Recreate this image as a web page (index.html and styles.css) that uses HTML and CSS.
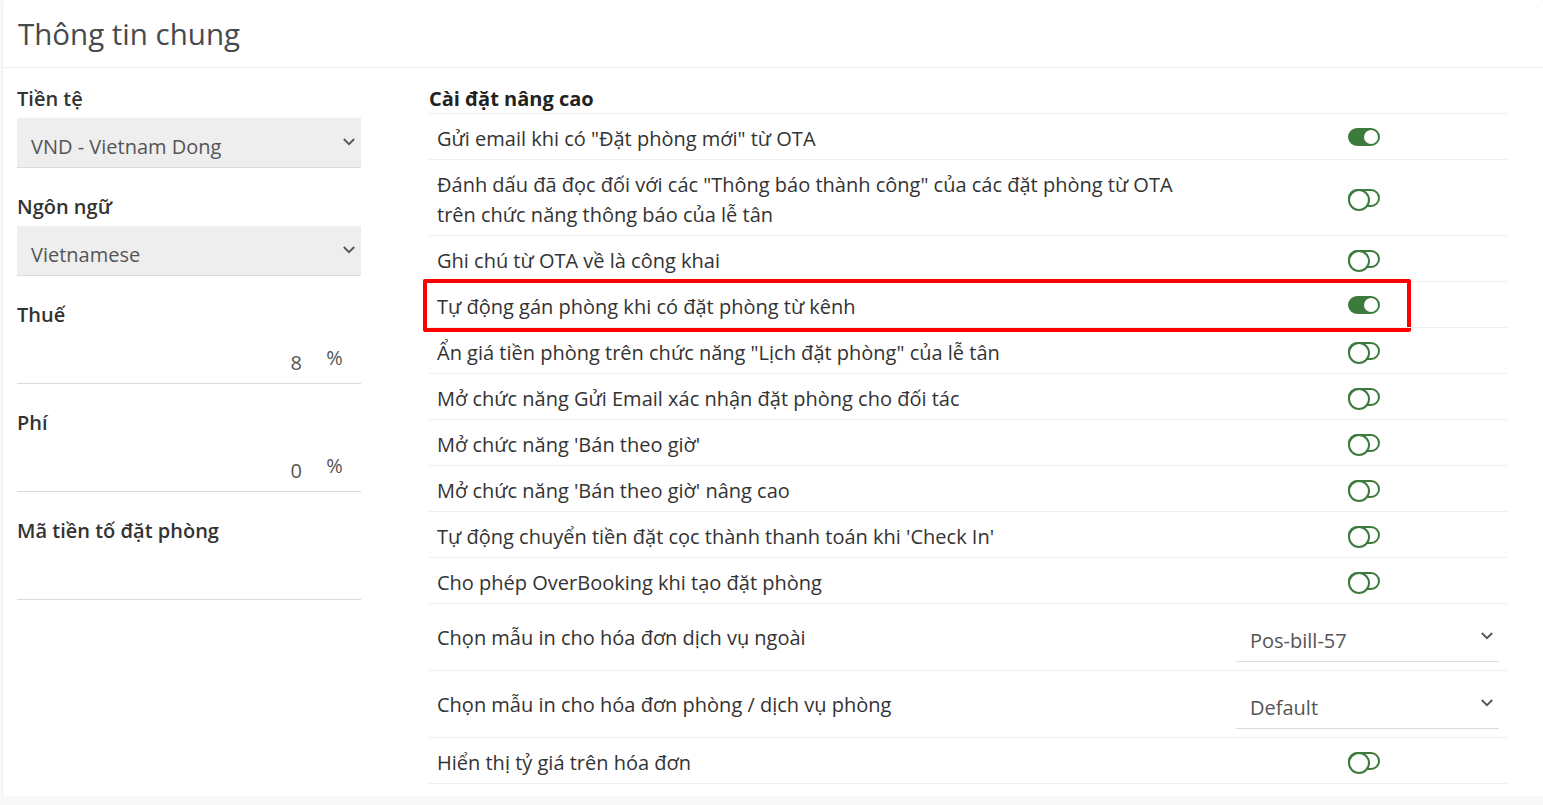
FILE: index.html
```html
<!DOCTYPE html>
<html lang="vi">
<head>
<meta charset="utf-8">
<title>Thông tin chung</title>
<link rel="stylesheet" href="styles.css">
</head>
<body>
<div class="card">
  <div class="card-header">
    <h1 class="card-title">Thông tin chung</h1>
  </div>
  <div class="card-body">
    <div class="left-col">
      <div class="form-group">
        <div class="label">Tiền tệ</div>
        <div class="select grey">
          <span class="select-text">VND - Vietnam Dong</span>
          <svg class="chev" width="12" height="8" viewBox="0 0 12 8"><path d="M0.8 1l5.2 5.2 5.2-5.2" fill="none" stroke="#555" stroke-width="1.8"/></svg>
        </div>
      </div>
      <div class="form-group">
        <div class="label">Ngôn ngữ</div>
        <div class="select grey">
          <span class="select-text">Vietnamese</span>
          <svg class="chev" width="12" height="8" viewBox="0 0 12 8"><path d="M0.8 1l5.2 5.2 5.2-5.2" fill="none" stroke="#555" stroke-width="1.8"/></svg>
        </div>
      </div>
      <div class="form-group">
        <div class="label">Thuế</div>
        <div class="input-group">
          <span class="input-value">8</span>
          <span class="addon">%</span>
        </div>
      </div>
      <div class="form-group">
        <div class="label">Phí</div>
        <div class="input-group">
          <span class="input-value">0</span>
          <span class="addon">%</span>
        </div>
      </div>
      <div class="form-group">
        <div class="label">Mã tiền tố đặt phòng</div>
        <div class="input-group"></div>
      </div>
    </div>

    <div class="right-col">
      <div class="section-title">Cài đặt nâng cao</div>
      <div class="settings">
        <div class="row">
          <div class="row-text">Gửi email khi có "Đặt phòng mới" từ OTA</div>
          <div class="row-ctrl"><span class="switch on"></span></div>
        </div>
        <div class="row">
          <div class="row-text">Đánh dấu đã đọc đối với các "Thông báo thành công" của các đặt phòng từ OTA<br>trên chức năng thông báo của lễ tân</div>
          <div class="row-ctrl"><span class="switch"></span></div>
        </div>
        <div class="row">
          <div class="row-text">Ghi chú từ OTA về là công khai</div>
          <div class="row-ctrl"><span class="switch"></span></div>
        </div>
        <div class="row highlighted">
          <div class="row-text">Tự động gán phòng khi có đặt phòng từ kênh</div>
          <div class="row-ctrl"><span class="switch on"></span></div>
          <span class="red-box"></span>
        </div>
        <div class="row">
          <div class="row-text">Ẩn giá tiền phòng trên chức năng "Lịch đặt phòng" của lễ tân</div>
          <div class="row-ctrl"><span class="switch"></span></div>
        </div>
        <div class="row">
          <div class="row-text">Mở chức năng Gửi Email xác nhận đặt phòng cho đối tác</div>
          <div class="row-ctrl"><span class="switch"></span></div>
        </div>
        <div class="row">
          <div class="row-text">Mở chức năng 'Bán theo giờ'</div>
          <div class="row-ctrl"><span class="switch"></span></div>
        </div>
        <div class="row">
          <div class="row-text">Mở chức năng 'Bán theo giờ' nâng cao</div>
          <div class="row-ctrl"><span class="switch"></span></div>
        </div>
        <div class="row">
          <div class="row-text">Tự động chuyển tiền đặt cọc thành thanh toán khi 'Check In'</div>
          <div class="row-ctrl"><span class="switch"></span></div>
        </div>
        <div class="row">
          <div class="row-text">Cho phép OverBooking khi tạo đặt phòng</div>
          <div class="row-ctrl"><span class="switch"></span></div>
        </div>
        <div class="row select-row">
          <div class="row-text">Chọn mẫu in cho hóa đơn dịch vụ ngoài</div>
          <div class="row-ctrl">
            <div class="select">
              <span class="select-text">Pos-bill-57</span>
              <svg class="chev" width="12" height="8" viewBox="0 0 12 8"><path d="M0.8 1l5.2 5.2 5.2-5.2" fill="none" stroke="#555" stroke-width="1.8"/></svg>
            </div>
          </div>
        </div>
        <div class="row select-row">
          <div class="row-text">Chọn mẫu in cho hóa đơn phòng / dịch vụ phòng</div>
          <div class="row-ctrl">
            <div class="select">
              <span class="select-text">Default</span>
              <svg class="chev" width="12" height="8" viewBox="0 0 12 8"><path d="M0.8 1l5.2 5.2 5.2-5.2" fill="none" stroke="#555" stroke-width="1.8"/></svg>
            </div>
          </div>
        </div>
        <div class="row last">
          <div class="row-text">Hiển thị tỷ giá trên hóa đơn</div>
          <div class="row-ctrl"><span class="switch"></span></div>
        </div>
      </div>
    </div>
  </div>
</div>
</body>
</html>
```
FILE: styles.css
```css
* { box-sizing: border-box; }

html, body {
  margin: 0;
  padding: 0;
  background: #f8f8f9;
}

body {
  font-family: "Open Sans", "Noto Sans", "Liberation Sans", sans-serif;
  font-size: 20px;
  line-height: 30px;
  color: #333;
  height: 805px;
  overflow: hidden;
}

.card {
  margin-left: 2px;
  height: 796px;
  background: #fff;
  border-left: 1px solid #ececf2;
  border-top-left-radius: 4px;
  border-top-right-radius: 4px;
  overflow: hidden;
}

.card-header {
  height: 68px;
  border-bottom: 1px solid #f0f0f0;
  padding: 0 15px;
  display: flex;
  align-items: center;
}

.card-title {
  margin: 0;
  font-size: 29.5px;
  font-weight: 500;
  line-height: 36px;
  color: #464a4f;
}

.card-body {
  display: grid;
  grid-template-columns: 344px 1078px;
  column-gap: 68px;
  padding: 16px 0 0 14px;
}

/* left column */
.form-group {
  margin-bottom: 24px;
}

.label {
  font-weight: 600;
  line-height: 30px;
  margin-bottom: 4px;
  color: #333;
}

.select {
  height: 50px;
  display: flex;
  align-items: center;
  justify-content: space-between;
  padding: 0 6px 0 14px;
  border-bottom: 1px solid #dcdcdc;
  color: #555;
}

.select.grey {
  background: #eeeeee;
}

.select-text {
  padding-top: 9px;
}

.chev {
  display: block;
  margin-top: -1px;
}

.input-group {
  height: 50px;
  display: flex;
  align-items: center;
  justify-content: flex-end;
  border-bottom: 1px solid #dcdcdc;
  color: #555;
}

.input-value {
  padding-top: 8px;
  padding-right: 8px;
}

.addon {
  width: 51px;
  text-align: center;
  padding-right: 2px;
  margin-top: -2px;
}

/* right column */
.section-title {
  font-weight: 700;
  line-height: 29px;
  color: #222;
}

.row {
  position: relative;
  display: grid;
  grid-template-columns: 1fr 279px;
  align-items: center;
  border-top: 1px solid #efefef;
}

.row.last {
  border-bottom: 1px solid #efefef;
}

.row-text {
  padding: 10px 8px 5px 8px;
  line-height: 30px;
}

.row-ctrl {
  padding: 0 8px;
  display: flex;
  justify-content: center;
}

.row-ctrl .switch {
  margin-right: 7px;
  margin-top: 1px;
}

.select-row .row-ctrl {
  display: block;
  padding-top: 8px;
  padding-bottom: 8px;
}

.select-row .row-text {
  padding-top: 2px;
  padding-bottom: 0;
}

/* switch */
.switch {
  position: relative;
  display: block;
  width: 32px;
  height: 18px;
  border: 2px solid #3d7a3d;
  border-radius: 9px;
  background: #fff;
}

.switch::after {
  content: "";
  position: absolute;
  left: -2px;
  top: -2px;
  width: 18px;
  height: 18px;
  border: 2px solid #3d7a3d;
  border-radius: 50%;
  background: #fff;
}

.switch.on {
  background: #3d7a3d;
}

.switch.on::after {
  left: auto;
  right: 0;
  top: 0;
  width: 14px;
  height: 14px;
  border: none;
}

/* annotation overlay */
.red-box {
  position: absolute;
  left: -6px;
  top: -3px;
  width: 988px;
  height: 53px;
  border: 4px solid #ff0000;
  border-radius: 2px;
  pointer-events: none;
}
```
